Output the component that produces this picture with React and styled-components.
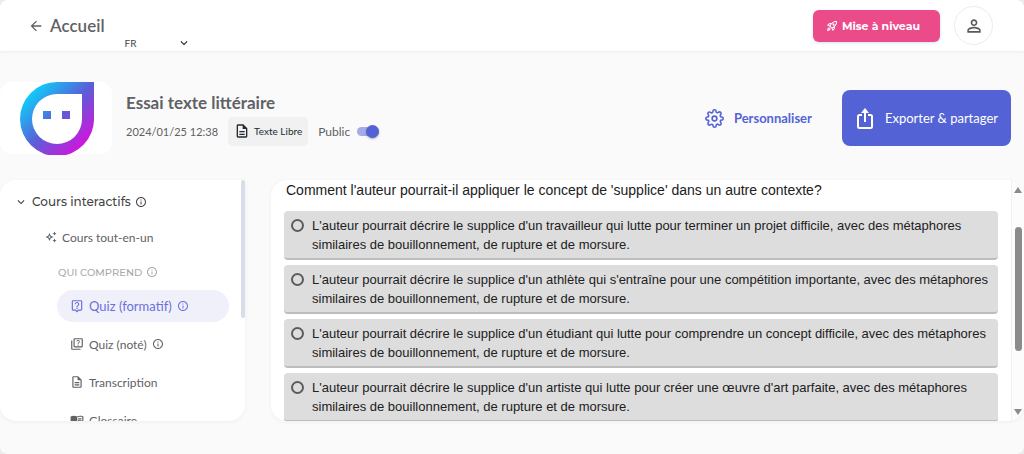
import React, { useState } from "react";
import styled, { createGlobalStyle } from "styled-components";
import {
  MdArrowBack,
  MdInfoOutline,
  MdKeyboardArrowDown,
  MdOutlineAutoAwesome,
  MdOutlineDescription,
  MdOutlineLiveHelp,
  MdOutlineMenuBook,
  MdOutlineQuiz,
  MdOutlineRocketLaunch,
  MdPersonOutline,
} from "react-icons/md";
import { FiSettings } from "react-icons/fi";

const GlobalStyle = createGlobalStyle`
  * {
    box-sizing: border-box;
  }

  body {
    margin: 0;
    background-color: #ececec;
    font-family: Lato, sans-serif;
    color: #5f6164;
  }

  button, select {
    font-family: inherit;
  }
`;

const Page = styled.div`
  display: flex;
  flex-direction: column;
  height: 100vh;
  overflow: hidden;
  background-color: #fafafa;
  border-radius: 8px;
`;

const Header = styled.header`
  display: flex;
  align-items: center;
  height: 51px;
  padding: 0 31px 0 28px;
  background-color: #fff;
  box-shadow: 0 1px 3px rgba(0, 0, 0, 0.06);
`;

const BackLink = styled.a`
  display: flex;
  align-items: center;
  gap: 6px;
  color: #5f6164;
  font-size: 17px;
  font-weight: 600;
  text-decoration: none;
`;

const LanguageField = styled.label`
  display: flex;
  align-items: center;
  align-self: flex-end;
  margin-left: 20px;

  svg {
    margin-left: -14px;
    pointer-events: none;
  }
`;

const LanguageSelect = styled.select`
  appearance: none;
  width: 66px;
  height: 16px;
  padding: 0;
  border: none;
  background: none;
  color: #444;
  font-size: 10px;
`;

const HeaderActions = styled.div`
  display: flex;
  align-items: center;
  gap: 14px;
  margin-left: auto;
`;

const UpgradeButton = styled.button`
  display: flex;
  align-items: center;
  gap: 4px;
  height: 32px;
  padding: 0 20px 0 13px;
  border: none;
  border-radius: 6px;
  background-color: #ec4b89;
  box-shadow: 0 1px 3px rgba(80, 130, 200, 0.25);
  color: #fff;
  font-family: Montserrat, Inter, sans-serif;
  font-size: 11px;
  font-weight: 700;
`;

const AvatarButton = styled.button`
  display: flex;
  align-items: center;
  justify-content: center;
  width: 39px;
  height: 39px;
  padding: 0;
  border: 1px solid #e9ecf5;
  border-radius: 50%;
  background-color: #fff;
  color: #5a5a5a;
`;

const TitleBar = styled.section`
  display: flex;
  align-items: center;
  padding: 31px 13px 26px 0;
`;

const LogoCard = styled.div`
  display: flex;
  width: 112px;
  height: 72px;
  padding-left: 19px;
  border-radius: 12px;
  background-color: #fff;
`;

const TitleInfo = styled.div`
  display: flex;
  flex-direction: column;
  gap: 2px;
  margin-left: 14px;
`;

const Title = styled.h1`
  margin: 0;
  font-size: 17px;
  font-weight: 700;
  line-height: 24px;
`;

const Meta = styled.div`
  display: flex;
  align-items: center;
  gap: 10px;
  font-size: 12px;
`;

const DateText = styled.time`
  font-size: 11px;
`;

const TypeChip = styled.span`
  display: flex;
  align-items: center;
  gap: 4px;
  height: 29px;
  padding: 0 6px;
  border-radius: 4px;
  background-color: #f1f1f1;
  color: #222b33;
  font-size: 10px;
`;

const PublicLabel = styled.label`
  display: flex;
  align-items: center;
  gap: 7px;
`;

const Switch = styled.input`
  appearance: none;
  position: relative;
  width: 22px;
  height: 9px;
  margin: 0;
  border-radius: 5px;
  background-color: #a4ace8;

  &::before {
    content: "";
    position: absolute;
    top: -2px;
    left: 0;
    width: 13px;
    height: 13px;
    border-radius: 50%;
    background-color: #5363d6;
    box-shadow: 0 1px 2px rgba(0, 0, 0, 0.3);
  }

  &:checked::before {
    left: 9px;
  }
`;

const TitleActions = styled.div`
  display: flex;
  align-items: center;
  gap: 30px;
  margin-left: auto;
`;

const CustomizeButton = styled.button`
  display: flex;
  align-items: center;
  gap: 10px;
  padding: 0;
  border: none;
  background: none;
  color: #5363d6;
  font-size: 13px;
  font-weight: 700;
`;

const ExportButton = styled.button`
  display: flex;
  align-items: center;
  gap: 12px;
  height: 56px;
  padding: 0 13px 0 15px;
  border: none;
  border-radius: 8px;
  background-color: #5363d6;
  color: #fff;
  font-size: 13px;
  font-weight: 400;
`;

const Content = styled.main`
  display: flex;
  flex: 1;
  gap: 26px;
  min-height: 0;
  margin-bottom: 33px;
`;

const Sidebar = styled.nav`
  display: flex;
  flex: 0 0 245px;
  justify-content: space-between;
  overflow: hidden;
  border-radius: 16px 0 16px 16px;
  background-color: #fff;
  box-shadow: 0 1px 4px rgba(0, 0, 0, 0.05);
`;

const SidebarList = styled.div`
  flex: 1;
  padding: 11px 12px 0 14px;
`;

const SidebarThumb = styled.div`
  width: 4px;
  height: 138px;
  border-radius: 2px;
  background-color: #d7deea;
`;

const SectionButton = styled.button`
  display: flex;
  align-items: center;
  gap: 4px;
  height: 21px;
  padding: 0;
  border: none;
  background: none;
  color: #444;
  font-family: Montserrat, Inter, sans-serif;
  font-size: 12px;
  font-weight: 500;
`;

const GroupLabel = styled.div`
  display: flex;
  align-items: center;
  gap: 4px;
  height: 20px;
  margin: 9px 0 8px 44px;
  color: #a9a9a9;
  font-family: Montserrat, Inter, sans-serif;
  font-size: 10px;
  font-weight: 500;
`;

const NavItem = styled.a`
  display: flex;
  align-items: center;
  gap: 5px;
  height: 32px;
  margin-left: ${({ $nested }) => ($nested ? "43px" : "31px")};
  margin-top: ${({ $nested }) => ($nested ? "6px" : "9px")};
  padding-left: ${({ $nested }) => ($nested ? "13px" : "0")};
  border-radius: 16px;
  background-color: ${({ $active }) => ($active ? "#f0f0fa" : "transparent")};
  color: ${({ $active }) => ($active ? "#6b70d8" : "#5f6164")};
  font-size: ${({ $active }) => ($active ? "13px" : "12px")};
  text-decoration: none;
`;

const QuizPanel = styled.section`
  display: flex;
  flex: 1;
  overflow: hidden;
  border-radius: 16px;
  background-color: #fff;
  box-shadow: 0 1px 4px rgba(0, 0, 0, 0.05);
`;

const Question = styled.fieldset`
  display: flex;
  flex: 1;
  flex-direction: column;
  gap: 5px;
  min-width: 0;
  margin: 0;
  padding: 0 13px;
  border: none;
  color: #212121;
  font-family: "Liberation Sans", Arial, sans-serif;
`;

const QuestionText = styled.legend`
  padding: 0 2px 10px;
  font-size: 14px;
  line-height: 21px;
`;

const Option = styled.label`
  display: flex;
  flex-shrink: 0;
  gap: 8px;
  padding: 5px 7px 4px;
  border-bottom: 2px solid #bdbdbd;
  border-radius: 4px;
  background-color: #ddd;
  font-size: 13px;
  line-height: 19px;
`;

const Radio = styled.input`
  appearance: none;
  flex: none;
  width: 13px;
  height: 13px;
  margin: 3px 0;
  border: 2px solid #5c5c5c;
  border-radius: 50%;

  &:checked {
    background-color: #5c5c5c;
  }
`;

const Scrollbar = styled.div`
  display: flex;
  flex-direction: column;
  align-items: center;
  justify-content: space-between;
  width: 13px;
  padding: 7px 0 6px;
  border-left: 1px solid #f1f1f1;
  background-color: #fcfcfc;
`;

const ScrollThumb = styled.div`
  width: 7px;
  height: 124px;
  margin-bottom: 24px;
  border-radius: 4px;
  background-color: #8b8b8b;
`;

const Logo = () => (
  <svg width="75" height="73" viewBox="0 0 75 73">
    <defs>
      <linearGradient id="logo" x1="0" y1="0" x2="1" y2="1">
        <stop offset="0.08" stopColor="#00e0ff" />
        <stop offset="0.5" stopColor="#5a5fd8" />
        <stop offset="0.88" stopColor="#d810dc" />
      </linearGradient>
    </defs>
    <path
      fill="url(#logo)"
      fillRule="evenodd"
      d="M38 0H75V36A37 37 0 1 1 38 0ZM38 12A25 25 0 1 0 63 37V12ZM24 29h8v8h-8ZM43 29h8v8h-8Z"
    />
  </svg>
);

const ShareIcon = () => (
  <svg width="16" height="21" viewBox="0 0 16 21" fill="none" stroke="#fff" strokeWidth="2">
    <path d="M5 7H2.500Q1 7 1 8.500V18.500Q1 20 2.500 20H13.500Q15 20 15 18.500V8.500Q15 7 13.500 7H11M8 14V2" />
    <path d="M4 5L8 0L12 5Z" fill="#fff" stroke="none" />
  </svg>
);

const Arrow = ({ down }) => (
  <svg width="8" height="6" viewBox="0 0 8 6" fill="#8b8b8b">
    <path d={down ? "M0 0H8L4 6Z" : "M0 6H8L4 0Z"} />
  </svg>
);

const navItems = [
  { label: "Quiz (formatif)", icon: MdOutlineLiveHelp, info: true },
  { label: "Quiz (noté)", icon: MdOutlineQuiz, info: true },
  { label: "Transcription", icon: MdOutlineDescription },
  { label: "Glossaire", icon: MdOutlineMenuBook },
];

const options = [
  "L'auteur pourrait décrire le supplice d'un travailleur qui lutte pour terminer un projet difficile, avec des métaphores similaires de bouillonnement, de rupture et de morsure.",
  "L'auteur pourrait décrire le supplice d'un athlète qui s'entraîne pour une compétition importante, avec des métaphores similaires de bouillonnement, de rupture et de morsure.",
  "L'auteur pourrait décrire le supplice d'un étudiant qui lutte pour comprendre un concept difficile, avec des métaphores similaires de bouillonnement, de rupture et de morsure.",
  "L'auteur pourrait décrire le supplice d'un artiste qui lutte pour créer une œuvre d'art parfaite, avec des métaphores similaires de bouillonnement, de rupture et de morsure.",
];

const App = () => {
  const [isPublic, setIsPublic] = useState(true);
  const [active, setActive] = useState("Quiz (formatif)");
  const [answer, setAnswer] = useState(null);

  return (
    <>
      <GlobalStyle />
      <Page>
        <Header>
          <BackLink href="#">
            <MdArrowBack size={16} />
            Accueil
          </BackLink>
          <LanguageField>
            <LanguageSelect aria-label="Langue" defaultValue="FR">
              <option>FR</option>
              <option>EN</option>
            </LanguageSelect>
            <MdKeyboardArrowDown size={14} color="#222" />
          </LanguageField>
          <HeaderActions>
            <UpgradeButton>
              <MdOutlineRocketLaunch size={12} />
              Mise à niveau
            </UpgradeButton>
            <AvatarButton aria-label="Profil">
              <MdPersonOutline size={20} />
            </AvatarButton>
          </HeaderActions>
        </Header>

        <TitleBar>
          <LogoCard>
            <Logo />
          </LogoCard>
          <TitleInfo>
            <Title>Essai texte littéraire</Title>
            <Meta>
              <DateText>2024/01/25 12:38</DateText>
              <TypeChip>
                <MdOutlineDescription size={16} />
                Texte Libre
              </TypeChip>
              <PublicLabel>
                Public
                <Switch
                  type="checkbox"
                  checked={isPublic}
                  onChange={(e) => setIsPublic(e.target.checked)}
                />
              </PublicLabel>
            </Meta>
          </TitleInfo>
          <TitleActions>
            <CustomizeButton>
              <FiSettings size={19} />
              Personnaliser
            </CustomizeButton>
            <ExportButton>
              <ShareIcon />
              Exporter &amp; partager
            </ExportButton>
          </TitleActions>
        </TitleBar>

        <Content>
          <Sidebar>
            <SidebarList>
              <SectionButton>
                <MdKeyboardArrowDown size={14} />
                Cours interactifs
                <MdInfoOutline size={12} />
              </SectionButton>
              <NavItem href="#">
                <MdOutlineAutoAwesome size={12} />
                Cours tout-en-un
              </NavItem>
              <GroupLabel>
                QUI COMPREND
                <MdInfoOutline size={12} />
              </GroupLabel>
              {navItems.map(({ label, icon: Icon, info }) => (
                <NavItem
                  key={label}
                  href="#"
                  $nested
                  $active={label === active}
                  onClick={() => setActive(label)}
                >
                  <Icon size={14} />
                  {label}
                  {info && <MdInfoOutline size={12} />}
                </NavItem>
              ))}
            </SidebarList>
            <SidebarThumb />
          </Sidebar>

          <QuizPanel>
            <Question>
              <QuestionText>
                Comment l'auteur pourrait-il appliquer le concept de 'supplice' dans un autre contexte?
              </QuestionText>
              {options.map((text, index) => (
                <Option key={text}>
                  <Radio
                    type="radio"
                    name="answer"
                    checked={answer === index}
                    onChange={() => setAnswer(index)}
                  />
                  {text}
                </Option>
              ))}
            </Question>
            <Scrollbar>
              <Arrow />
              <ScrollThumb />
              <Arrow down />
            </Scrollbar>
          </QuizPanel>
        </Content>
      </Page>
    </>
  );
};

export default App;
